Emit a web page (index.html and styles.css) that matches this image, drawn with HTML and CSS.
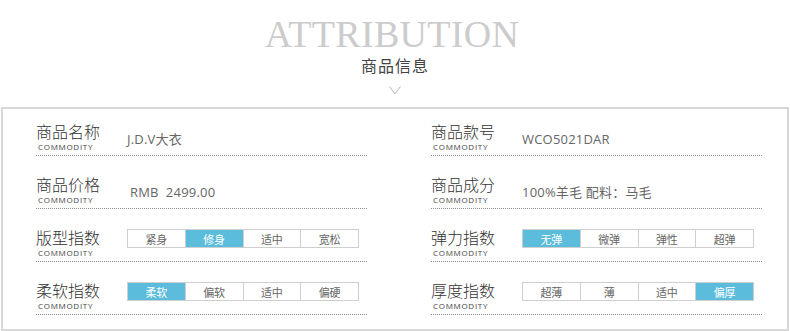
FILE: index.html
```html
<!DOCTYPE html>
<html lang="zh-CN">
<head>
<meta charset="utf-8">
<title>商品信息</title>
<link rel="stylesheet" href="styles.css">
</head>
<body>
<header class="head">
  <div class="title-en">ATTRIBUTION</div>
  <div class="title-cn">商品信息</div>
  <svg class="chev" width="12" height="9" viewBox="0 0 12 9"><path d="M0.5 0.5 L6 8 L11.5 0.5" fill="none" stroke="#b5b5b5" stroke-width="1"/></svg>
</header>
<section class="box">
  <div class="grid">
    <div class="row">
      <div class="label"><div class="cn">商品名称</div><div class="en">COMMODITY</div></div>
      <div class="value">J.D.V大衣</div>
    </div>
    <div class="row">
      <div class="label"><div class="cn">商品款号</div><div class="en">COMMODITY</div></div>
      <div class="value">WCO5021DAR</div>
    </div>
    <div class="row">
      <div class="label"><div class="cn">商品价格</div><div class="en">COMMODITY</div></div>
      <div class="value price">RMB&nbsp;&nbsp;2499.00</div>
    </div>
    <div class="row">
      <div class="label"><div class="cn">商品成分</div><div class="en">COMMODITY</div></div>
      <div class="value">100%羊毛 配料：马毛</div>
    </div>
    <div class="row top">
      <div class="label"><div class="cn">版型指数</div><div class="en">COMMODITY</div></div>
      <div class="scale"><span>紧身</span><span class="on">修身</span><span>适中</span><span>宽松</span></div>
    </div>
    <div class="row top">
      <div class="label"><div class="cn">弹力指数</div><div class="en">COMMODITY</div></div>
      <div class="scale"><span class="on">无弹</span><span>微弹</span><span>弹性</span><span>超弹</span></div>
    </div>
    <div class="row top">
      <div class="label"><div class="cn">柔软指数</div><div class="en">COMMODITY</div></div>
      <div class="scale"><span class="on">柔软</span><span>偏软</span><span>适中</span><span>偏硬</span></div>
    </div>
    <div class="row top">
      <div class="label"><div class="cn">厚度指数</div><div class="en">COMMODITY</div></div>
      <div class="scale"><span>超薄</span><span>薄</span><span>适中</span><span class="on">偏厚</span></div>
    </div>
  </div>
</section>
</body>
</html>
```

FILE: styles.css
```css
html, body {
  margin: 0;
  padding: 0;
  background: #fff;
}
body {
  width: 790px;
  height: 331px;
  overflow: hidden;
  font-family: "Open Sans", "Noto Sans CJK SC", sans-serif;
  color: #333;
}
.head {
  height: 107px;
  display: flex;
  flex-direction: column;
  align-items: center;
}
.title-en {
  margin-top: 14px;
  margin-right: 6px;
  font-family: "Liberation Serif", "DejaVu Serif", serif;
  font-size: 38px;
  line-height: 40px;
  color: #cccccc;
  letter-spacing: 0.3px;
}
.title-cn {
  margin-top: 1px;
  font-family: "Noto Sans CJK SC", sans-serif;
  font-size: 16px;
  line-height: 20px;
  color: #444;
  letter-spacing: 1px;
}
.chev {
  display: block;
  margin-top: 11px;
}
.box {
  margin: 0 1px;
  height: 224px;
  box-sizing: border-box;
  border: 2px solid #d8d8d8;
}
.grid {
  display: grid;
  grid-template-columns: 331px 331px;
  column-gap: 64px;
  row-gap: 20px;
  padding: 14px 0 0 33px;
}
.row {
  display: flex;
  align-items: center;
  padding-bottom: 4px;
  border-bottom: 1px dotted #8c8c8c;
}
.row.top {
  align-items: flex-start;
}
.label {
  width: 91px;
  flex: none;
}
.cn {
  font-family: "Noto Sans CJK SC", sans-serif;
  font-size: 16px;
  line-height: 17px;
  color: #333;
  font-weight: 300;
}
.en {
  margin-top: 2px;
  font-family: "Open Sans", "Liberation Sans", sans-serif;
  font-size: 8px;
  line-height: 9px;
  color: #444;
  padding-left: 2px;
  letter-spacing: 0.7px;
}
.value {
  font-size: 13px;
  line-height: 16px;
  color: #666;
  margin-top: 3px;
  letter-spacing: 0.2px;
}
.value.price {
  padding-left: 3px;
}
.scale {
  display: flex;
  width: 232px;
  height: 19px;
  box-sizing: border-box;
  border: 1px solid #cfcfcf;
}
.scale span {
  flex: 1;
  display: flex;
  align-items: center;
  justify-content: center;
  font-family: "Noto Sans CJK SC", sans-serif;
  font-size: 11px;
  color: #666;
  border-left: 1px solid #cfcfcf;
}
.scale span:first-child {
  border-left: none;
}
.scale span.on {
  background: #5bbcdb;
  color: #fff;
}
```
